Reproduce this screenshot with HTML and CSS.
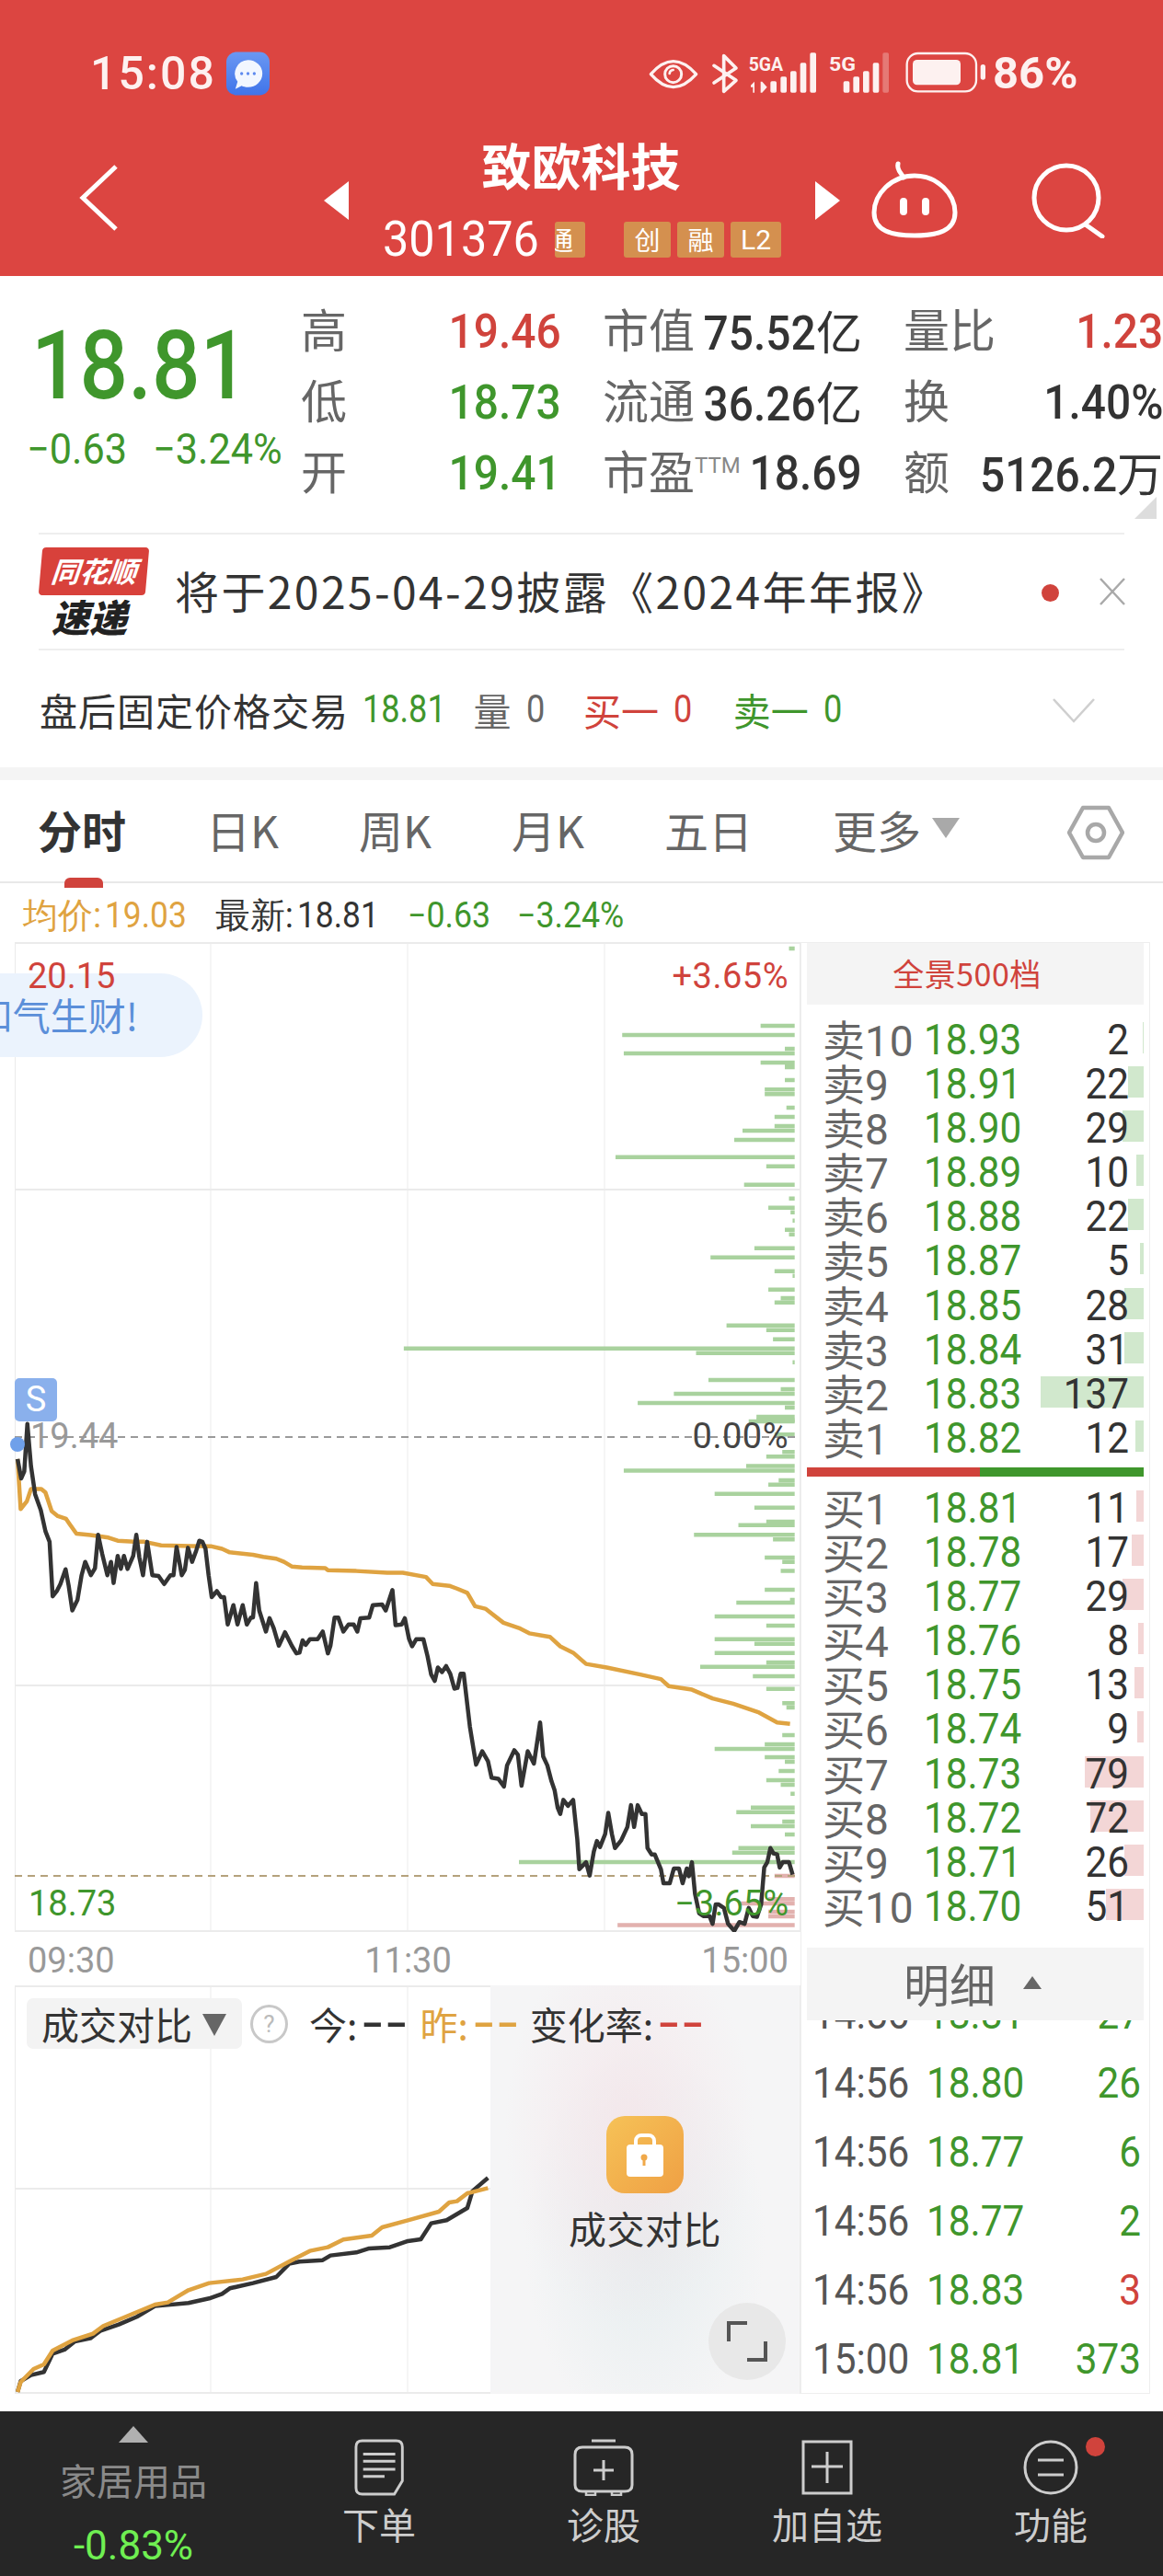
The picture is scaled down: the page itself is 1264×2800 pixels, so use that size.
FILE: index.html
```html
<!DOCTYPE html>
<html lang="zh">
<head>
<meta charset="utf-8">
<title>致欧科技</title>
<link rel="stylesheet" href="styles.css">
</head>
<body>
<div class="page">
  <header class="header">
    <div class="status">
      <div class="status-left">
        <span class="clock">15:08</span>
        <svg class="chat" viewBox="0 0 48 48"><defs><linearGradient id="cg" x1="0" y1="0" x2="0" y2="1"><stop offset="0" stop-color="#6a97f2"/><stop offset="1" stop-color="#3f74ea"/></linearGradient></defs><rect width="48" height="48" rx="11" fill="url(#cg)"/><path d="M24 9a16 15 0 0 1 0 30c-3 0-5-.5-7-1.500L10 41l2.500-8A15 15 0 0 1 24 9Z" fill="#f2f7ff"/><circle cx="17" cy="24" r="1.700" fill="#5d8aef"/><circle cx="24" cy="24" r="1.700" fill="#5d8aef"/><circle cx="31" cy="24" r="1.700" fill="#5d8aef"/></svg>
      </div>
      <div class="status-right">
        <svg class="sys-icons" viewBox="0 0 1170 240">
          <g fill="none" stroke="#fdf1f0" stroke-linejoin="round" stroke-linecap="round">
            <path d="M52 122Q125 38 200 122Q125 206 52 122Z" stroke-width="10"/>
            <circle cx="125" cy="122" r="27" stroke-width="9"/>
            <path d="M113 120a13 13 0 0 1 12-12" stroke-width="8"/>
            <path d="M258 94L330 142L290 178V62L330 102L258 150" stroke-width="11"/>
            <rect x="887" y="54" width="226" height="124" rx="36" stroke-width="7"/>
            <line x1="1135" y1="98" x2="1135" y2="132" stroke-width="16"/>
          </g>
          <g fill="#fdf1f0">
            <text class="sig" x="371" y="112" textLength="112" lengthAdjust="spacingAndGlyphs">5GA</text>
            <text class="sig" x="633" y="112" textLength="87" lengthAdjust="spacingAndGlyphs">5G</text>
            <path d="M378 158l12-12v36h-5v-18h-7ZM410 146h5l16 18l-16 18h-5Z"/>
            <rect x="442" y="145" width="20" height="37" rx="5"/><rect x="475" y="130" width="20" height="52" rx="5"/><rect x="507" y="112" width="20" height="70" rx="5"/><rect x="539" y="85" width="20" height="97" rx="5"/><rect x="571" y="52" width="20" height="130" rx="5"/>
            <rect x="680" y="145" width="20" height="37" rx="5"/><rect x="712" y="130" width="20" height="52" rx="5"/><rect x="744" y="112" width="20" height="70" rx="5"/><rect x="776" y="85" width="20" height="97" rx="5"/><rect x="808" y="52" width="20" height="130" rx="5" opacity=".3"/>
            <rect x="906" y="75" width="156" height="82" rx="14"/>
          </g>
        </svg>
        <span class="battery">86%</span>
      </div>
    </div>
    <div class="nav">
      <svg class="back" viewBox="0 0 44 76"><path d="M40 4L4 38L40 72" fill="none" stroke="#fff" stroke-width="5"/></svg>
      <svg class="arrow arrow-l" viewBox="0 0 27 42"><path d="M27 0V42L0 21Z" fill="#fff"/></svg>
      <div class="stock">
        <div class="stock-name">致欧科技</div>
        <div class="stock-sub">
          <span class="code">301376</span>
          <span class="tag tag-clip">通</span>
          <span class="tag tag-gap">创</span>
          <span class="tag">融</span>
          <span class="tag tag-l2">L2</span>
        </div>
      </div>
      <svg class="arrow arrow-r" viewBox="0 0 27 42"><path d="M0 0V42L27 21Z" fill="#fff"/></svg>
      <svg class="robot" viewBox="0 0 94 86" fill="none" stroke="#fff" stroke-width="5" stroke-linecap="round"><path d="M35 20C33 15 27 12 29 5"/><path d="M47 18C72 18 91 38 91 58C91 78 72 83 47 83C22 83 3 78 3 58C3 38 22 18 47 18Z"/><path d="M35 46V57M59 46V57" stroke-width="8"/></svg>
      <svg class="search" viewBox="0 0 80 82" fill="none" stroke="#fff" stroke-width="5" stroke-linecap="round"><circle cx="38" cy="38" r="35"/><path d="M60 68L77 80"/></svg>
    </div>
  </header>

  <section class="quote">
    <div class="price-box">
      <div class="price">18.81</div>
      <div class="price-chg"><span class="chg-a">−0.63</span><span class="chg-b">−3.24%</span></div>
    </div>
    <div class="stats">
      <div class="stat-col col-a">
        <span class="lbl">高</span><span class="val up"><span class="n">19.46</span></span>
        <span class="lbl">低</span><span class="val dn"><span class="n">18.73</span></span>
        <span class="lbl">开</span><span class="val dn"><span class="n">19.41</span></span>
      </div>
      <div class="stat-col col-b">
        <span class="lbl">市值</span><span class="val ink"><span class="n">75.52</span><span class="unit">亿</span></span>
        <span class="lbl">流通</span><span class="val ink"><span class="n">36.26</span><span class="unit">亿</span></span>
        <span class="lbl">市盈<sup class="ttm">TTM</sup></span><span class="val ink"><span class="n">18.69</span></span>
      </div>
      <div class="stat-col col-c">
        <span class="lbl">量比</span><span class="val up"><span class="n">1.23</span></span>
        <span class="lbl">换</span><span class="val ink"><span class="n">1.40%</span></span>
        <span class="lbl">额</span><span class="val ink"><span class="n">5126.2</span><span class="unit">万</span></span>
      </div>
    </div>
    <span class="corner"></span>
  </section>

  <section class="news">
    <div class="logo">
      <div class="logo-top">同花顺</div>
      <div class="logo-bot">速递</div>
    </div>
    <div class="news-text">将于2025-04-29披露《2024年年报》</div>
    <span class="news-dot"></span>
    <svg class="news-x" viewBox="0 0 30 32"><path d="M2 2L28 30M28 2L2 30" stroke="#a9a9a9" stroke-width="2.500" fill="none"/></svg>
  </section>

  <section class="after">
    <span class="after-title">盘后固定价格交易</span>
    <span class="after-num dn a-price">18.81</span>
    <span class="after-lbl a-vol">量</span><span class="after-num a-n">0</span>
    <span class="after-lbl up a-buy">买一</span><span class="after-num up a-n">0</span>
    <span class="after-lbl dn a-sell">卖一</span><span class="after-num dn a-n">0</span>
    <svg class="after-chev" viewBox="0 0 48 28"><path d="M2 2L24 26L46 2" fill="none" stroke="#cfcfcf" stroke-width="2.500"/></svg>
  </section>

  <div class="strip"></div>

  <nav class="tabs">
    <span class="tab tab-on">分时</span>
    <span class="tab">日K</span>
    <span class="tab">周K</span>
    <span class="tab">月K</span>
    <span class="tab">五日</span>
    <span class="tab">更多<i class="more-tri"></i></span>
    <svg class="hex" viewBox="0 0 62 60" fill="none" stroke="#a8a8a8" stroke-width="4.500"><path d="M17 3H45L60 30L45 57H17L2 30Z" stroke-linejoin="round"/><circle cx="31" cy="30" r="9"/></svg>
  </nav>

  <div class="legend">
    <span class="gold">均价:<span class="lg-n">19.03</span></span>
    <span class="ink lg-b">最新:<span class="lg-n">18.81</span></span>
    <span class="dn lg-c"><span class="lg-m">−0.63</span></span>
    <span class="dn lg-d"><span class="lg-m">−3.24%</span></span>
  </div>

  <main class="main">
    <div class="charts">
      <div class="price-chart">
        <svg class="plot" viewBox="0 0 854 1076">
          <g class="grid">
            <path d="M.5 0V1076M213 0V1076M427 0V1076M641 0V1076M853.500 0V1076"/>
            <path class="grid-h" d="M0 1H854M0 269H854M0 808H854M0 1075H854"/>
          </g>
          <g class="vol-g" transform="translate(-16,-24) scale(.5612,.3571)">
            <path class="bar" d="M1528 87H1539M1473 322H1539M1205 350H1539M1520 392H1539M1208 406H1539M1473 434H1539M1520 441H1539M1520 448H1539M1520 487H1539M1481 516H1539M1481 530H1539M1523 571H1539M1500 599H1539M1500 627H1539M1438 641H1539M1422 669H1539M1192 722H1539M1484 750H1539M1441 806H1539M1528 848H1539M1488 876H1539M1531 890H1539M1535 915H1539M1520 943H1539M1528 957H1539M1461 999H1539M1376 1027H1539M1500 1069H1539M1535 1083H1539M1488 1125H1539M1512 1151H1539M1500 1164H1539M1407 1234H1539M1484 1248H1539M1497 1276H1539M782 1304H1539M1348 1318H1539M1535 1346H1539M1372 1400H1539M1512 1428H1539M1305 1442H1539M1235 1470H1539M1520 1484H1539M1465 1512H1539M1450 1526H1539"/>
          </g>
          <g transform="translate(-16,516) scale(.5612,.3827)">
            <path class="bar" d="M1465 10H1539M1500 50H1539M1515 100H1539M1484 113H1539M1445 140H1539M1208 153H1539M1508 180H1539M1488 193H1539M1384 219H1539M1461 258H1539M1484 298H1539M1430 308H1539M1344 335H1539M1497 348H1539M1481 400H1539M1515 412H1539M1512 438H1539M1481 491H1539M1530 520H1539M1426 528H1539M1384 567H1539M1484 593H1539M1384 632H1539M1461 645H1539M1384 671H1539M1484 698H1539M1356 710H1539M1458 737H1539M1484 773H1539M1515 813H1539M1523 826H1539M1515 904H1539M1481 930H1539M1384 943H1539M1481 967H1539M1520 980H1539M1508 1006H1539M1484 1032H1539M1512 1045H1539M1531 1071H1539M1454 1110H1539M1426 1123H1539M1515 1150H1539M1454 1163H1539M1520 1186H1539M1430 1225H1539M1418 1238H1539M1005 1265H1539"/>
            <path class="bar bar-red" d="M1500 1304H1539M1488 1370H1539M1430 1382H1539M1488 1406H1539M1488 1419H1539M1196 1444H1539"/>
          </g>
          <line class="ref" x1="0" y1="538" x2="854" y2="538"/>
          <line class="ref ref-low" x1="0" y1="1015" x2="854" y2="1015"/>
          <g transform="translate(-16,516) scale(.5612,.3827)">
            <polyline class="line line-gold" points="34,120 40,262 52,240 60,205 80,205 88,215 100,268 112,282 128,290 135,305 148,332 175,336 210,343 228,352 260,355 280,355 312,365 370,367 410,368 430,375 445,385 490,392 510,398 535,403 550,412 565,425 585,428 630,430 635,436 690,438 750,443 780,443 825,455 838,475 870,480 885,488 905,500 920,538 940,545 975,585 1005,600 1025,615 1065,625 1085,652 1110,670 1135,702 1175,712 1240,732 1280,745 1295,765 1340,775 1380,800 1420,815 1470,840 1505,868 1530,872"/>
            <polyline class="line line-black" points="34,120 41,175 47,155 53,20 60,140 68,220 79,265 88,325 96,355 102,510 110,495 117,475 127,433 133,480 140,550 150,520 158,450 165,412 176,450 184,430 190,335 198,390 208,450 215,412 220,472 228,395 234,432 240,395 247,432 258,395 264,335 270,400 277,450 285,355 295,450 307,452 318,475 330,450 336,450 342,370 352,450 358,435 364,372 372,412 380,380 386,352 392,355 398,375 404,450 410,512 420,495 428,512 434,512 441,590 452,535 460,590 470,535 478,590 486,570 490,570 496,472 502,550 515,610 522,572 530,600 540,650 552,612 565,650 574,672 580,670 586,635 592,648 600,632 615,632 625,610 635,672 640,650 648,570 655,570 665,610 675,590 685,590 692,610 698,572 715,570 722,535 740,533 747,550 760,492 766,592 778,590 784,572 792,630 798,652 806,632 820,632 828,680 835,732 842,750 848,712 856,725 864,708 872,730 880,772 886,770 892,730 898,730 910,880 922,988 934,950 945,978 952,1025 965,1028 976,1050 982,990 996,947 1003,960 1010,1048 1022,950 1034,985 1046,868 1052,965 1060,990 1068,1035 1074,1060 1080,1110 1085,1128 1091,1088 1100,1105 1110,1088 1118,1200 1122,1285 1135,1265 1142,1303 1150,1235 1156,1205 1162,1222 1172,1185 1178,1125 1185,1185 1191,1225 1203,1203 1215,1165 1222,1103 1228,1165 1235,1103 1243,1128 1250,1128 1254,1225 1262,1243 1268,1243 1280,1285 1285,1325 1297,1325 1305,1283 1315,1283 1322,1325 1330,1283 1334,1305 1340,1265 1346,1355 1354,1410 1362,1418 1374,1418 1380,1440 1386,1385 1392,1385 1402,1395 1410,1440 1422,1460 1432,1435 1442,1440 1450,1395 1458,1418 1466,1420 1474,1385 1480,1280 1486,1265 1492,1225 1498,1240 1505,1243 1510,1280 1516,1265 1528,1265 1535,1300"/>
          </g>
        </svg>
        <div class="pill">和气生财!</div>
        <span class="axis up ax-tl">20.15</span>
        <span class="axis up ax-tr">+3.65%</span>
        <span class="axis grey ax-ml">19.44</span>
        <span class="axis ink2 ax-mr">0.00%</span>
        <span class="axis dn ax-bl">18.73</span>
        <span class="axis dn ax-br">−3.65%</span>
        <span class="s-badge">S</span>
        <span class="s-dot"></span>
      </div>
      <div class="time-axis"><span>09:30</span><span>11:30</span><span>15:00</span></div>
      <div class="sub-chart">
        <svg class="plot" viewBox="0 0 854 444">
          <g class="grid">
            <path d="M.5 0V444M213 0V444M427 0V444M853.500 0V444"/>
            <path class="grid-h" d="M0 1H854M0 221H854M0 443H854"/>
          </g>
          <g transform="translate(-16,-28) scale(.5612,.3333)">
            <polyline class="line line-black" points="34,1410 40,1375 60,1355 85,1345 102,1285 125,1272 145,1245 175,1235 195,1210 230,1190 265,1165 300,1130 365,1120 405,1105 430,1090 445,1072 490,1055 535,1035 560,992 580,985 625,980 640,965 690,955 715,942 755,938 790,918 815,912 835,860 865,850 905,810 915,755 945,712"/>
            <polyline class="line line-gold" points="34,1410 40,1378 65,1335 85,1320 102,1275 140,1242 180,1220 200,1195 240,1167 300,1125 325,1118 365,1078 405,1055 470,1043 515,1025 560,985 600,950 635,938 665,913 720,900 740,873 790,850 850,822 870,792 885,788 905,762 945,745"/>
          </g>
        </svg>
        <div class="lock-panel">
          <svg class="lock" viewBox="0 0 84 84"><defs><linearGradient id="lg" x1="0" y1="0" x2="1" y2="1"><stop offset="0" stop-color="#f6c257"/><stop offset="1" stop-color="#efa044"/></linearGradient></defs><rect width="84" height="84" rx="20" fill="url(#lg)"/><path d="M32 32V27a6 6 0 0 1 6-6h8a6 6 0 0 1 6 6v5" fill="none" stroke="#fff" stroke-width="4"/><path d="M22 35a4 4 0 0 1 4-4h32a4 4 0 0 1 4 4v27a4 4 0 0 1-4 4H26a4 4 0 0 1-4-4Z" fill="#fff"/><circle cx="41" cy="45" r="3.500" fill="#f0a94a"/><path d="M39.500 46h3v8h-3Z" fill="#f0a94a"/></svg>
          <div class="lock-text">成交对比</div>
          <span class="expand"><svg viewBox="0 0 44 44" fill="none" stroke="#555" stroke-width="4"><path d="M2 22V2H22M22 42H42V22"/></svg></span>
        </div>
        <div class="sub-head">
          <span class="dropdown">成交对比<i class="drop-tri"></i></span>
          <span class="help">?</span>
          <span class="kv kv-a">今:<b class="dash">--</b></span>
          <span class="kv kv-b gold">昨:<b class="dash">--</b></span>
          <span class="kv kv-c">变化率:<b class="dash up">--</b></span>
        </div>
      </div>
    </div>

    <aside class="panel">
      <div class="panel-head">全景500档</div>
      <div class="book book-sell">
        <div class="row"><i class="bar-q g" style="width:1px"></i><span class="r-l">卖<em>10</em></span><span class="r-p">18.93</span><span class="r-q">2</span></div>
        <div class="row"><i class="bar-q g" style="width:17px"></i><span class="r-l">卖<em>9</em></span><span class="r-p">18.91</span><span class="r-q">22</span></div>
        <div class="row"><i class="bar-q g" style="width:23px"></i><span class="r-l">卖<em>8</em></span><span class="r-p">18.90</span><span class="r-q">29</span></div>
        <div class="row"><i class="bar-q g" style="width:8px"></i><span class="r-l">卖<em>7</em></span><span class="r-p">18.89</span><span class="r-q">10</span></div>
        <div class="row"><i class="bar-q g" style="width:17px"></i><span class="r-l">卖<em>6</em></span><span class="r-p">18.88</span><span class="r-q">22</span></div>
        <div class="row"><i class="bar-q g" style="width:4px"></i><span class="r-l">卖<em>5</em></span><span class="r-p">18.87</span><span class="r-q">5</span></div>
        <div class="row"><i class="bar-q g" style="width:21px"></i><span class="r-l">卖<em>4</em></span><span class="r-p">18.85</span><span class="r-q">28</span></div>
        <div class="row"><i class="bar-q g" style="width:21px"></i><span class="r-l">卖<em>3</em></span><span class="r-p">18.84</span><span class="r-q">31</span></div>
        <div class="row"><i class="bar-q g" style="width:112px"></i><span class="r-l">卖<em>2</em></span><span class="r-p">18.83</span><span class="r-q">137</span></div>
        <div class="row"><i class="bar-q g" style="width:9px"></i><span class="r-l">卖<em>1</em></span><span class="r-p">18.82</span><span class="r-q">12</span></div>
      </div>
      <div class="ratio"><i class="ratio-r"></i><i class="ratio-g"></i></div>
      <div class="book book-buy">
        <div class="row"><i class="bar-q r" style="width:8px"></i><span class="r-l">买<em>1</em></span><span class="r-p">18.81</span><span class="r-q">11</span></div>
        <div class="row"><i class="bar-q r" style="width:13px"></i><span class="r-l">买<em>2</em></span><span class="r-p">18.78</span><span class="r-q">17</span></div>
        <div class="row"><i class="bar-q r" style="width:23px"></i><span class="r-l">买<em>3</em></span><span class="r-p">18.77</span><span class="r-q">29</span></div>
        <div class="row"><i class="bar-q r" style="width:6px"></i><span class="r-l">买<em>4</em></span><span class="r-p">18.76</span><span class="r-q">8</span></div>
        <div class="row"><i class="bar-q r" style="width:10px"></i><span class="r-l">买<em>5</em></span><span class="r-p">18.75</span><span class="r-q">13</span></div>
        <div class="row"><i class="bar-q r" style="width:7px"></i><span class="r-l">买<em>6</em></span><span class="r-p">18.74</span><span class="r-q">9</span></div>
        <div class="row"><i class="bar-q r" style="width:64px"></i><span class="r-l">买<em>7</em></span><span class="r-p">18.73</span><span class="r-q">79</span></div>
        <div class="row"><i class="bar-q r" style="width:58px"></i><span class="r-l">买<em>8</em></span><span class="r-p">18.72</span><span class="r-q">72</span></div>
        <div class="row"><i class="bar-q r" style="width:21px"></i><span class="r-l">买<em>9</em></span><span class="r-p">18.71</span><span class="r-q">26</span></div>
        <div class="row"><i class="bar-q r" style="width:41px"></i><span class="r-l">买<em>10</em></span><span class="r-p">18.70</span><span class="r-q">51</span></div>
      </div>
      <div class="detail-head">明细<i class="detail-tri"></i></div>
      <div class="trades">
        <div class="trade"><span class="t-time">14:56</span><span class="t-p">18.81</span><span class="t-q dn">27</span></div>
        <div class="trade"><span class="t-time">14:56</span><span class="t-p">18.80</span><span class="t-q dn">26</span></div>
        <div class="trade"><span class="t-time">14:56</span><span class="t-p">18.77</span><span class="t-q dn">6</span></div>
        <div class="trade"><span class="t-time">14:56</span><span class="t-p">18.77</span><span class="t-q dn">2</span></div>
        <div class="trade"><span class="t-time">14:56</span><span class="t-p">18.83</span><span class="t-q up">3</span></div>
        <div class="trade"><span class="t-time">15:00</span><span class="t-p">18.81</span><span class="t-q dn">373</span></div>
      </div>
    </aside>
  </main>

  <footer class="bottom">
    <div class="b-sector">
      <i class="b-tri"></i>
      <span class="b-name">家居用品</span>
      <span class="b-pct">-0.83%</span>
    </div>
    <div class="b-item">
      <svg class="b-ico" viewBox="0 0 56 64" fill="none" stroke="#cdcdcd" stroke-width="3"><path d="M9 2H47Q54 2 54 9V47L45 62H9Q2 62 2 55V9Q2 2 9 2Z"/><path d="M10 17H46M10 25H46M10 34H46M10 42H34"/></svg>
      <span>下单</span>
    </div>
    <div class="b-item">
      <svg class="b-ico" viewBox="0 0 66 62" fill="none" stroke="#cdcdcd" stroke-width="3"><path d="M20 2H46" /><path d="M10 9H56Q64 9 64 17V50Q64 57 56 57H10Q2 57 2 50V17Q2 9 10 9Z"/><path d="M33 23V45M22 34H44" /><path d="M14 58V61H24V58M42 58V61H52V58" stroke-width="2.500"/></svg>
      <span>诊股</span>
    </div>
    <div class="b-item">
      <svg class="b-ico" viewBox="0 0 56 62" fill="none" stroke="#cdcdcd" stroke-width="3"><path d="M2 3H54V59H2Z"/><path d="M28 14V48M11 30H45"/></svg>
      <span>加自选</span>
    </div>
    <div class="b-item b-func">
      <svg class="b-ico" viewBox="0 0 60 62" fill="none" stroke="#cdcdcd" stroke-width="3"><circle cx="30" cy="31" r="28"/><path d="M16 23H44M16 39H44"/></svg>
      <i class="b-badge"></i>
      <span>功能</span>
    </div>
  </footer>
</div>
</body>
</html>
```
FILE: styles.css
```css
:root {
  --red: #d0433c;
  --green: #3f962c;
  --ink: #333;
  --gold: #dfa341;
  --num: Roboto, sans-serif;
  --cjk: "Noto Sans CJK SC", sans-serif;
}
* { box-sizing: border-box; }
html, body { margin: 0; padding: 0; background: #fff; }
body { font-family: Roboto, "Noto Sans CJK SC", sans-serif; color: var(--ink); }
i, em, b { font-style: normal; font-weight: inherit; }
.page { width: 1264px; height: 2800px; display: flex; flex-direction: column; overflow: hidden; }
.up { color: var(--red); }
.dn { color: var(--green); }
.ink { color: var(--ink); }
.ink2 { color: #444; }
.grey { color: #999; }
.gold { color: var(--gold); }

/* header */
.header { height: 300px; background: #dc4541; color: #fff; flex: none; }
.status { height: 48px; margin-top: 56px; padding: 0 0 0 98px; display: flex; justify-content: space-between; align-items: center; }
.status-left { display: flex; align-items: center; gap: 11px; }
.clock { font: 500 50px/48px Roboto, sans-serif; letter-spacing: 2px; color: #fdf1f0; }
.chat { width: 47px; height: 48px; }
.status-right { display: flex; align-items: center; margin-right: 90px; }
.sys-icons { width: 390px; height: 80px; }
.sig { font: 700 62px Roboto, sans-serif; }
.battery { font: 700 49px/48px Roboto, sans-serif; color: #fdf1f0; margin-left: -1px; width: 95px; }
.nav { display: flex; align-items: center; padding: 36px 0 0 86px; height: 196px; }
.back { width: 44px; height: 76px; margin-top: -10px; }
.arrow { width: 27px; height: 42px; margin-top: -5px; }
.arrow-l { margin-left: 222px; }
.stock { width: 434px; margin-left: 37px; margin-top: -8px; text-align: center; }
.stock-name { font: 700 54px/60px var(--cjk); margin-top: -3px; margin-left: -3px; }
.stock-sub { display: flex; align-items: center; height: 40px; margin-top: 31px; }
.code { display: block; font: 400 53px/40px var(--num); width: 187px; text-align: left; transform: scaleX(.95); transform-origin: left center; }
.tag { display: inline-block; background: #d4904f; color: #fff; font: 400 28px/39px var(--cjk); height: 39px; width: 51px; margin-right: 7px; border-radius: 3px; text-align: center; flex: none; }
.tag-clip { width: 33px; text-align: left; overflow: hidden; text-indent: -8px; margin-right: 0; }
.tag-gap { margin-left: 42px; }
.tag-l2 { width: 55px; font: 400 30px/39px Roboto, sans-serif; margin-right: 0; }
.arrow-r { margin-left: 36px; }
.robot { width: 94px; height: 86px; margin-left: 34px; margin-top: -8px; }
.search { width: 80px; height: 82px; margin-left: 80px; margin-top: -4px; }

/* quote */
.quote { height: 279px; flex: none; display: flex; position: relative; }
.price-box { width: 327px; padding: 48px 0 0 30px; flex: none; }
.price { font: 500 104px/100px var(--num); color: var(--green); margin-left: 4px; transform: scaleX(.89); transform-origin: left center; }
.price-chg { font: 400 46px/44px var(--num); color: var(--green); display: flex; margin-top: 18px; margin-left: -1px; }
.chg-a, .chg-b { display: block; transform: scaleX(.94); transform-origin: left center; white-space: nowrap; }
.chg-a { width: 137px; flex: none; }
.stats { display: flex; gap: 45px; padding-top: 22px; flex: none; }
.stat-col { display: grid; grid-auto-rows: 77px; align-items: center; }
.col-a { grid-template-columns: 50px 233px; }
.col-b { grid-template-columns: 82px 200px; }
.col-c { grid-template-columns: 60px 222px; }
.lbl { font: 400 50px/77px var(--cjk); color: #666; white-space: nowrap; margin-top: -8px; }
.val { font: 500 52px/77px var(--num); text-align: right; white-space: nowrap; display: block; }
.n { display: inline-block; transform: scaleX(.92); transform-origin: right center; }
.unit { font: 400 50px/77px var(--cjk); }
.ttm { font: 400 24px/1 Roboto, sans-serif; color: #888; vertical-align: 18px; transform: scaleX(.95); }
.corner { position: absolute; right: 7px; bottom: 15px; width: 24px; height: 24px; background: #ddd; clip-path: polygon(100% 0, 100% 100%, 0 100%); }

/* news */
.news { height: 128px; flex: none; margin: 0 42px; border-top: 2px solid #eee; border-bottom: 2px solid #eee; display: flex; align-items: center; position: relative; }
.logo { width: 116px; flex: none; margin-left: 2px; }
.logo-top { background: #d8413b; color: #fff; font: italic 700 31px/50px var(--cjk); text-align: center; height: 52px; border-radius: 4px; transform: skewX(-5deg); }
.logo-bot { font: italic 900 41px/44px var(--cjk); text-align: center; color: #222; padding-right: 10px; }
.news-text { font: 400 48px/60px var(--cjk); letter-spacing: 2.400px; color: #333; margin-left: 30px; margin-top: -5px; white-space: nowrap; }
.news-dot { width: 19px; height: 19px; border-radius: 50%; background: var(--red); position: absolute; left: 1090px; top: 54px; }
.news-x { position: absolute; left: 1152px; top: 46px; width: 30px; height: 32px; }

/* after hours */
.after { height: 127px; flex: none; display: flex; align-items: center; padding-left: 43px; position: relative; }
.after-title { font: 400 41px/50px var(--cjk); letter-spacing: 1px; color: #333; white-space: nowrap; }
.after-lbl { font: 400 41px/50px var(--cjk); color: #666; white-space: nowrap; }
.after-lbl.up { color: var(--red); }
.after-lbl.dn { color: var(--green); }
.after-num { font: 400 42px/50px var(--num); color: #666; transform: scaleX(.86); transform-origin: left center; }
.after-num.up { color: var(--red); }
.after-num.dn { color: var(--green); }
.a-price { margin-left: 15px; }
.a-vol { margin-left: 15px; }
.a-n { margin-left: 16px; }
.a-buy { margin-left: 39px; }
.a-sell { margin-left: 41px; }
.after-chev { position: absolute; left: 1143px; top: 51px; width: 48px; height: 28px; }
.strip { height: 14px; background: #f4f4f4; flex: none; }

/* tabs */
.tabs { height: 112px; flex: none; display: flex; align-items: center; padding: 0 0 0 41px; gap: 87px; border-bottom: 2px solid #e8e8e8; position: relative; }
.tab { font: 400 48px/60px var(--cjk); color: #666; white-space: nowrap; margin-top: -5px; display: flex; align-items: center; }
.tab-on { font-weight: 700; color: #333; position: relative; }
.tab-on::after { content: ""; position: absolute; left: 29px; bottom: -34px; width: 42px; height: 11px; border-radius: 6px 6px 0 0; background: var(--red); }
.more-tri { width: 0; height: 0; border: 15px solid transparent; border-top: 22px solid #a9a9a9; border-bottom: 0; margin-left: 12px; margin-top: -2px; }
.hex { position: absolute; left: 1160px; top: 27px; width: 62px; height: 60px; }

/* legend */
.legend { height: 64px; flex: none; padding: 6px 0 0 25px; display: flex; align-items: center; font: 400 38px/40px var(--num); white-space: nowrap; }
.lg-n { display: inline-block; transform: scaleX(.93); transform-origin: left center; margin: 0 -7px 0 4px; }
.lg-m { display: inline-block; transform: scaleX(.94); transform-origin: left center; margin-right: -7px; }
.lg-b { margin-left: 31px; }
.lg-c { margin-left: 32px; }
.lg-d { margin-left: 30px; }

/* main */
.main { height: 1578px; flex: none; display: flex; padding-left: 16px; }
.charts { width: 854px; flex: none; }
.plot { position: absolute; inset: 0; width: 100%; height: 100%; }
.grid path { stroke: #ebebeb; stroke-width: 1; fill: none; }
.grid .grid-h { stroke-width: 2; }
.bar { stroke: #a9d29e; stroke-width: 4.500px; fill: none; vector-effect: non-scaling-stroke; }
.bar-red { stroke: #e2b1ae; }
.ref { stroke: #9a9a9a; stroke-width: 2; stroke-dasharray: 8 6; }
.ref-low { stroke: #b5a27c; }
.line { fill: none; stroke-linejoin: round; vector-effect: non-scaling-stroke; }
.line-gold { stroke: #dfa341; stroke-width: 4.500px; }
.line-black { stroke: #333; stroke-width: 4.500px; }
.price-chart { height: 1076px; position: relative; }
.pill { position: absolute; left: -16px; top: 34px; width: 220px; height: 91px; background: #ebf3fd; border-radius: 0 46px 46px 0; color: #5b8fd9; font: 400 41px/88px var(--cjk); display: flex; justify-content: flex-end; padding-right: 70px; white-space: nowrap; overflow: hidden; }
.axis { position: absolute; font: 400 38px/38px var(--num); white-space: nowrap; }
.ax-tl { left: 14px; top: 18px; }
.ax-tr { right: 13px; top: 18px; letter-spacing: .5px; }
.ax-ml { left: 17px; top: 518px; }
.ax-mr { right: 13px; top: 518px; letter-spacing: .5px; }
.ax-bl { left: 15px; top: 1026px; }
.ax-br { right: 13px; top: 1026px; }
.s-badge { position: absolute; left: 0; top: 474px; width: 46px; height: 47px; border-radius: 5px; background: #8ab0ec; color: #fff; font: 400 38px/47px Roboto, sans-serif; text-align: center; }
.s-dot { position: absolute; left: -5px; top: 538px; width: 16px; height: 16px; border-radius: 50%; background: #6fa0ea; }
.time-axis { height: 58px; display: flex; justify-content: space-between; padding: 12px 13px 0 14px; font: 400 38px/38px var(--num); color: #999; }
.sub-chart { height: 444px; position: relative; }
.lock-panel { position: absolute; left: 517px; top: 0; width: 336px; height: 444px; display: flex; flex-direction: column; align-items: center; background: radial-gradient(ellipse at 45% 35%, rgba(244,229,233,.85), transparent 52%), radial-gradient(ellipse at 50% 62%, rgba(228,236,238,.9), transparent 55%), #f5f5f6; }
.lock { width: 84px; height: 84px; margin-top: 142px; }
.lock-text { font: 400 41px/50px var(--cjk); color: #333; margin-top: 12px; letter-spacing: .5px; }
.expand { position: absolute; left: 237px; top: 345px; width: 84px; height: 84px; border-radius: 50%; background: #e8e8e8; display: flex; align-items: center; justify-content: center; }
.expand svg { width: 44px; height: 44px; }
.sub-head { position: absolute; left: 13px; top: 14px; display: flex; align-items: center; font: 400 41px/55px var(--cjk); white-space: nowrap; }
.dropdown { width: 234px; height: 55px; background: #f3f3f3; border-radius: 7px; padding-left: 16px; display: flex; align-items: center; }
.drop-tri { width: 0; height: 0; border: 13px solid transparent; border-top: 24px solid #666; border-bottom: 0; margin-left: 11px; margin-top: 2px; }
.help { width: 41px; height: 42px; margin-left: 9px; border: 3px solid #c8c8c8; border-radius: 50%; color: #bbb; font: 400 26px/36px Roboto, sans-serif; text-align: center; }
.kv { display: flex; align-items: center; }
.dash { display: block; font: 700 40px/40px Roboto, sans-serif; width: 44px; margin-left: 4px; transform: scaleX(1.65); transform-origin: left center; }
.kv-a { margin-left: 23px; }
.kv-b { margin-left: 20px; }
.kv-c { margin-left: 19px; }

/* panel */
.panel { width: 380px; height: 1578px; flex: none; border: 1px solid #eee; padding: 0 6px; display: flex; flex-direction: column; }
.panel-head { height: 67px; flex: none; background: #f4f4f4; color: var(--red); text-align: center; font: 400 34px/65px var(--cjk); letter-spacing: .5px; padding-right: 18px; }
.book { flex: none; }
.book-sell { margin-top: 12px; }
.book-buy { margin-top: 8px; }
.row { position: relative; height: 48.1px; display: grid; grid-template-columns: 110px 105px 1fr; padding: 0 16px 0 17px; align-items: center; }
.r-l, .r-p, .r-q { position: relative; white-space: nowrap; }
.r-l { font: 400 46px/48px var(--cjk); color: #666; }
.r-l em { font: 400 46px/48px Roboto, sans-serif; letter-spacing: 1px; }
.r-p { font: 400 46px/48px var(--num); color: var(--green); transform: scaleX(.92); transform-origin: left center; }
.r-q { font: 400 46px/48px var(--num); color: var(--ink); text-align: right; transform: scaleX(.92); transform-origin: right center; }
.bar-q { position: absolute; right: 0; top: 7px; height: 34px; }
.bar-q.g { background: #d1e8cd; }
.bar-q.r { background: #f3d6d6; }
.ratio { height: 10px; margin-top: 10px; display: flex; flex: none; }
.ratio-r { width: 188px; background: var(--red); }
.ratio-g { flex: 1; background: var(--green); }
.detail-head { height: 79px; margin-top: 23px; flex: none; background: #f4f4f4; color: #666; font: 400 50px/77px var(--cjk); display: flex; padding-left: 105px; position: relative; z-index: 1; }
.detail-tri { width: 0; height: 0; border: 10px solid transparent; border-bottom: 14px solid #666; border-top: 0; margin-left: 30px; margin-top: 31px; }
.trades { flex: 1; min-height: 0; overflow: hidden; display: flex; flex-direction: column; justify-content: flex-end; }
.trade { height: 75px; flex: none; display: grid; grid-template-columns: 124px 120px 1fr; align-items: center; padding: 0 3px 0 6px; font: 400 46px/48px var(--num); }
.t-time { color: #555; transform: scaleX(.92); transform-origin: left center; }
.t-p { color: var(--green); transform: scaleX(.92); transform-origin: left center; }
.t-q { text-align: right; transform: scaleX(.92); transform-origin: right center; }

/* bottom */
.bottom { margin-top: 19px; height: 179px; flex: none; background: #262626; display: grid; grid-template-columns: 290px 244px 244px 242px 244px; color: #cdcdcd; }
.b-sector { display: flex; flex-direction: column; align-items: center; }
.b-tri { width: 0; height: 0; border: 16px solid transparent; border-bottom: 18px solid #b0b0b0; border-top: 0; margin-top: 16px; }
.b-name { font: 400 40px/50px var(--cjk); color: #8a8a8a; margin-top: 15px; }
.b-pct { font: 400 44px/46px var(--num); color: #6fef52; margin-top: 24px; }
.b-item { display: flex; flex-direction: column; align-items: center; position: relative; font: 400 40px/50px var(--cjk); }
.b-ico { height: 62px; margin-top: 30px; margin-bottom: 5px; }
.b-badge { position: absolute; left: 160px; top: 28px; width: 21px; height: 21px; border-radius: 50%; background: var(--red); }
```
